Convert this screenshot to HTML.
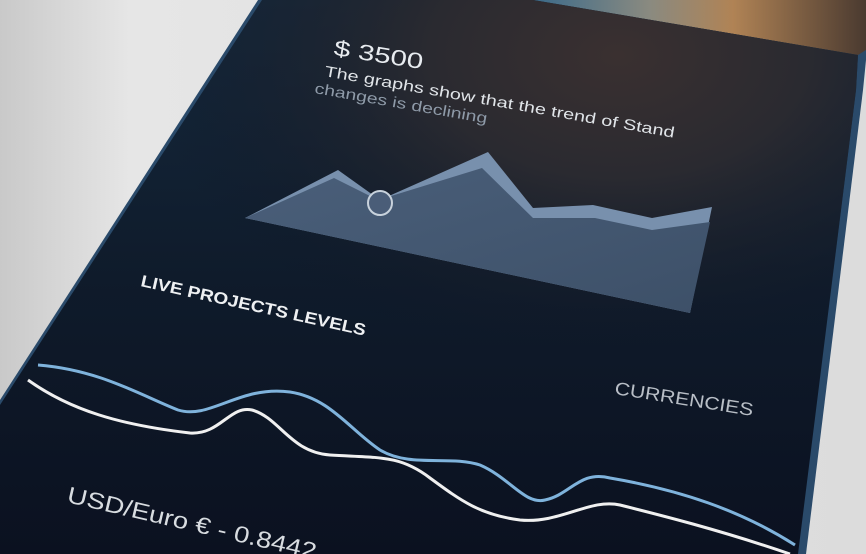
<!DOCTYPE html>
<html><head><style>
html,body{margin:0;padding:0;width:866px;height:554px;overflow:hidden;background:#d8d8d8}
svg{display:block}
text{font-family:"Liberation Sans",sans-serif}
</style></head><body>
<svg width="866" height="554" viewBox="0 0 866 554">
<defs>
<linearGradient id="bg" x1="0" y1="0" x2="1" y2="0">
<stop offset="0" stop-color="#c9c9c9"/><stop offset="0.15" stop-color="#e6e6e6"/><stop offset="1" stop-color="#dcdcdc"/>
</linearGradient>
<linearGradient id="bez" x1="0" y1="0" x2="1" y2="0">
<stop offset="0" stop-color="#3a6a8a"/><stop offset="0.35" stop-color="#8a8a80"/><stop offset="0.6" stop-color="#b08355"/><stop offset="1" stop-color="#4a3a30"/>
</linearGradient>
<radialGradient id="glow" cx="0.72" cy="0.1" r="0.55">
<stop offset="0" stop-color="#3a3030"/><stop offset="0.4" stop-color="#2a2a30"/><stop offset="1" stop-color="#0f1726" stop-opacity="0"/>
</radialGradient>
<linearGradient id="scr" x1="0" y1="0" x2="0" y2="1">
<stop offset="0" stop-color="#15293d"/><stop offset="0.5" stop-color="#0f1b2b"/><stop offset="1" stop-color="#0b1120"/>
</linearGradient>
<linearGradient id="ar" x1="0" y1="0" x2="1" y2="1">
<stop offset="0" stop-color="#4a5f7a"/><stop offset="1" stop-color="#3d5068"/>
</linearGradient>
</defs>
<rect width="866" height="554" fill="url(#bg)"/>
<polygon points="258,0 866,0 866,60 863,90 806,554 0,554 0,400" fill="#2a4a6a"/>
<polygon points="533,0 866,0 866,50 858,55" fill="url(#bez)"/>
<polygon points="262,0 533,0 858,55 856,90 798,554 0,554 0,405" fill="url(#scr)"/>
<polygon points="262,0 533,0 858,55 856,90 798,554 0,554 0,405" fill="url(#glow)"/>
<polygon points="245,218 338,170 380,200 488,152 533,208 593,205 652,218 712,207 690,313" fill="#7890ad"/>
<polygon points="245,218 334,178 378,200 482,168 533,218 595,218 652,230 710,222 690,313" fill="url(#ar)"/>
<circle cx="380" cy="203" r="12" fill="#4a5d78" stroke="#c8d2dc" stroke-width="2"/>
<path d="M38,365 C100,370 140,395 178,410 C210,420 240,385 290,392 C330,398 350,430 380,450 C410,468 450,455 480,465 C510,478 525,505 545,500 C570,495 580,470 610,478 C680,490 740,510 795,545" fill="none" stroke="#7fb3dc" stroke-width="3"/>
<path d="M28,380 C70,410 120,425 190,433 C220,435 230,405 252,410 C280,418 290,452 330,455 C380,458 400,455 430,478 C460,500 480,515 520,520 C560,524 590,498 620,505 C660,515 720,530 790,554" fill="none" stroke="#f0f0f0" stroke-width="3"/>
<text transform="translate(333,55) rotate(9)" font-size="22" fill="#e8ecf0" textLength="90" lengthAdjust="spacingAndGlyphs">$ 3500</text>
<text transform="translate(324,76) rotate(10)" font-size="15" fill="#e0e4e8" textLength="355" lengthAdjust="spacingAndGlyphs">The graphs show that the trend of  Stand</text>
<text transform="translate(314,93) rotate(10)" font-size="15" fill="#8e9aa8" textLength="175" lengthAdjust="spacingAndGlyphs">changes is declining</text>
<text transform="translate(140,286) rotate(12.5)" font-size="16.5" font-weight="bold" fill="#eef0f2" textLength="230" lengthAdjust="spacingAndGlyphs">LIVE PROJECTS LEVELS</text>
<text transform="translate(614,394) rotate(9)" font-size="18" fill="#b8bec6" textLength="140" lengthAdjust="spacingAndGlyphs">CURRENCIES</text>
<text transform="translate(66,502) rotate(13)" font-size="23" fill="#d8dce0" textLength="255" lengthAdjust="spacingAndGlyphs">USD/Euro € -  0.8442</text>
</svg>
</body></html>
